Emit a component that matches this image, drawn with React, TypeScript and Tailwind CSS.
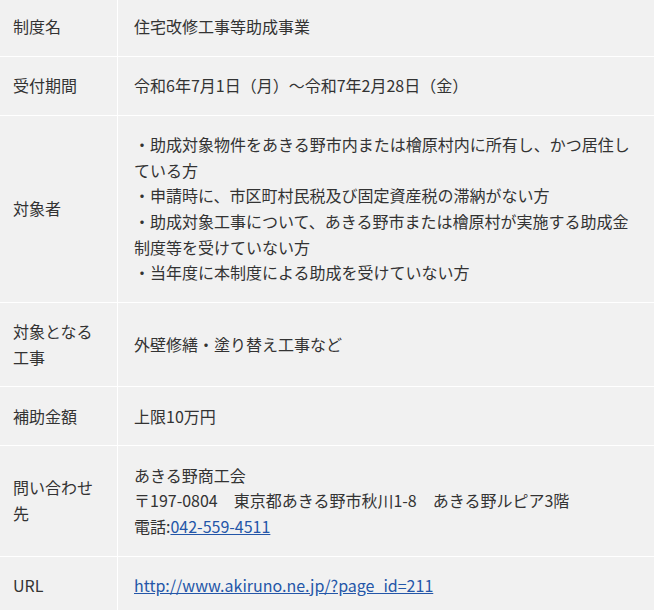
const rows: { label: React.ReactNode; body: React.ReactNode }[] = [
  { label: "制度名", body: "住宅改修工事等助成事業" },
  { label: "受付期間", body: "令和6年7月1日（月）～令和7年2月28日（金）" },
  {
    label: "対象者",
    body: (
      <>
        ・助成対象物件をあきる野市内または檜原村内に所有し、かつ居住している方
        <br />
        ・申請時に、市区町村民税及び固定資産税の滞納がない方
        <br />
        ・助成対象工事について、あきる野市または檜原村が実施する助成金制度等を受けていない方
        <br />
        ・当年度に本制度による助成を受けていない方
      </>
    ),
  },
  { label: "対象となる工事", body: "外壁修繕・塗り替え工事など" },
  { label: "補助金額", body: "上限10万円" },
  {
    label: "問い合わせ先",
    body: (
      <>
        あきる野商工会
        <br />
        〒197-0804　東京都あきる野市秋川1-8　あきる野ルピア3階
        <br />
        電話:
        <a href="#" className="text-[#2456a8] underline">
          042-559-4511
        </a>
      </>
    ),
  },
  {
    label: "URL",
    body: (
      <a href="#" className="text-[#2456a8] underline">
        http://www.akiruno.ne.jp/?page_id=211
      </a>
    ),
  },
];

export default function App() {
  return (
    <div
      className="h-[610px] w-[654px] overflow-hidden bg-white text-[16px] leading-[1.6] text-[#333]"
      style={{ fontFamily: '"Noto Sans CJK JP", "Noto Sans", sans-serif' }}
    >
      <div className="-mt-[2px] grid grid-cols-[117px_1fr] gap-px">
        {rows.map((r, i) => (
          <div key={i} className="contents">
            <div className="flex items-center bg-[#f1f1f1] py-[16.2px] pl-[13px] pr-3">
              <span>{r.label}</span>
            </div>
            <div className="flex items-center bg-[#f1f1f1] py-[16.2px] pl-4 pr-4">
              <div>{r.body}</div>
            </div>
          </div>
        ))}
      </div>
    </div>
  );
}
